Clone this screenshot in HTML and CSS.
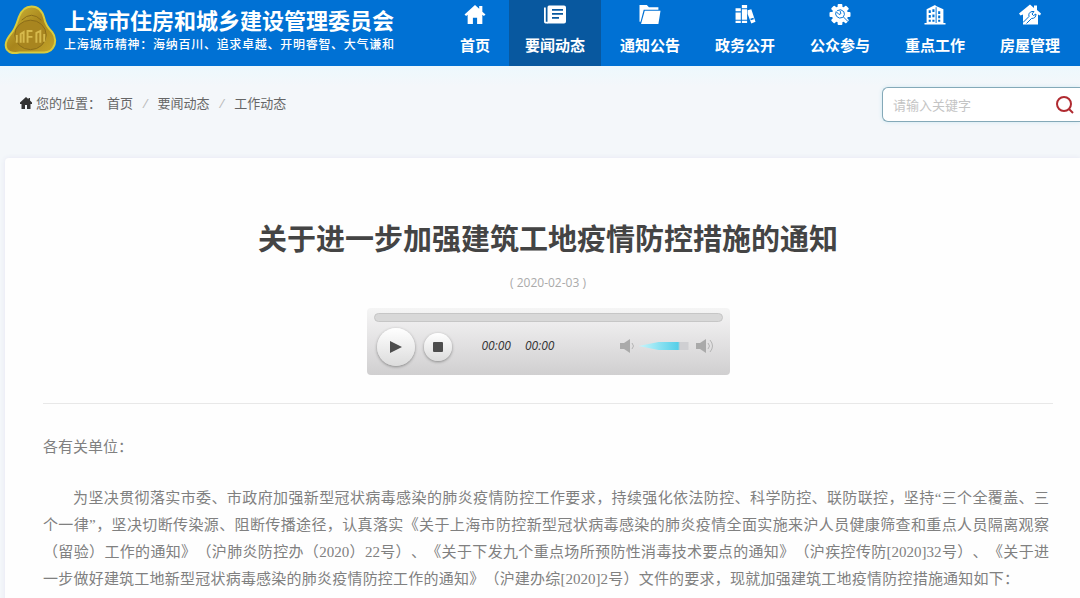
FILE: index.html
```html
<!DOCTYPE html>
<html lang="zh-CN">
<head>
  <meta charset="UTF-8">
  <meta name="viewport" content="width=device-width, initial-scale=1.0">
  <link rel="stylesheet" href="styles.css">
  <title>关于进一步加强建筑工地疫情防控措施的通知</title>
</head>
<body>

<header class="header">
  <a class="brand" href="#">
    <svg class="logo" viewBox="0 0 54 50" aria-hidden="true">
      <defs>
        <linearGradient id="gold" x1="0" y1="0" x2="1" y2="1">
          <stop offset="0" stop-color="#d2bd3c"/>
          <stop offset="0.5" stop-color="#a8851c"/>
          <stop offset="1" stop-color="#c5a52a"/>
        </linearGradient>
      </defs>
      <path d="M15 12C18 4 22 1 28 1C35 1 39 5 41 13C42 19 44 22 49 27C53 32 53 39 50 43C47 48 42 48 36 48H16C10 49 6 49 3 45C0 40 2 35 7 29C12 23 13 18 15 12Z" fill="url(#gold)" stroke="#d9cc3e" stroke-width="2"/>
      <ellipse cx="27" cy="30" rx="16" ry="15" fill="#a8851f" stroke="#8b6c18"/>
      <path d="M13 38V30M17 38V29L20 27V38M24 38V26H29M24 32H29M33 38V28L37 26V38M41 37V29" stroke="#d6b94c" stroke-width="2" fill="none"/>
      <path d="M18 15Q28 5 38 15" stroke="#8b6c18" stroke-width="1" fill="none"/>
    </svg>
    <span class="brand-text">
      <strong>上海市住房和城乡建设管理委员会</strong>
      <span class="motto">上海城市精神：海纳百川、追求卓越、开明睿智、大气谦和</span>
    </span>
  </a>
  <nav class="nav">
    <a href="#">
      <svg viewBox="0 0 20 20"><path d="M10 1L0 10l1.500 1.500L3 10.300V19h5v-6h4v6h5v-8.700l1.500 1.200L20 10l-3-2.700V2h-3v2.600z"/></svg>
      首页
    </a>
    <a class="active" href="#">
      <svg viewBox="0 0 22 20"><path d="M0 3h1.800v14.200H4V19H1.500Q0 19 0 17z"/><path fill-rule="evenodd" d="M5 1h15q2 0 2 2v14q0 2-2 2H3.500V3Q3.500 1 5 1zM8 4.500v1.800h11V4.500zm0 4v1.800h11V8.500zm0 4v1.800h7v-1.800z"/></svg>
      要闻动态
    </a>
    <a href="#">
      <svg viewBox="0 0 20 20"><path d="M0 1h7l2 2h9v2.500H4L1 17H0z"/><path d="M5 6.500h15L18 19H1.500z"/></svg>
      通知公告
    </a>
    <a href="#">
      <svg viewBox="0 0 20 20"><path fill-rule="evenodd" d="M1 4h5v14H1zm0 3v1h5V7zm0 8v1h5v-1zM7 1h5v17H7zm0 3v1h5V4zm0 11v1h5v-1zM12.500 6l3.500-1 4 12-4 1.500-3.500-9zm2.500 8l.5 1.500 3-1-.5-1.500z"/></svg>
      政务公开
    </a>
    <a href="#">
      <svg viewBox="0 0 22 22"><g><rect x="8.500" y="0" width="5" height="22" rx="1"/><rect x="8.500" y="0" width="5" height="22" rx="1" transform="rotate(45 11 11)"/><rect x="8.500" y="0" width="5" height="22" rx="1" transform="rotate(90 11 11)"/><rect x="8.500" y="0" width="5" height="22" rx="1" transform="rotate(135 11 11)"/><circle cx="11" cy="11" r="8.500"/></g><path class="cut" d="M8 7q4-2.500 7 1 1.500 3-.5 5.500l5 5M14 14q-4 2-6.500-1-2-2.500-.5-5l3 3 2-1-1-3"/></svg>
      公众参与
    </a>
    <a href="#">
      <svg viewBox="0 0 20 20"><path fill-rule="evenodd" d="M0 18h2V5l8-4 1 1 7 3v13h2v1.500H0zM4 6v2.500h2V6zm0 4.500V13h2v-2.500zM4 15v2h2v-2zM7.500 5v2.500h2V5zm0 5v2.500h2V10zm0 5v2h2v-2zM10.600 3v15h.9V3zM13 7v2.500h2V7zm0 4v2.500h2V11zm0 4v2h2v-2z"/></svg>
      重点工作
    </a>
    <a href="#">
      <svg viewBox="0 0 22 20"><path d="M11 0L0 9l1.500 2L4 10v10h15V10l2 1 1-2-4-3.500V1h-3v2.500z"/><path class="cut" d="M4 18l6-6q-1-4 3-5l2 0-2 2.500 1.500 1.500 2.500-1.500q0 4.500-4.500 4.500l-5 5"/></svg>
      房屋管理
    </a>
  </nav>
</header>

<div class="toolbar">
  <div class="crumbs">
    <svg viewBox="0 0 12 12" aria-hidden="true"><path d="M6 0L0 5.500V7h1.500v5H5V8h2v4h3.500V7H12V5.500L10 3.500V1H8.500v1.200z"/></svg>
    <span>您的位置：</span>
    <a href="#">首页</a>
    <i>/</i>
    <a href="#">要闻动态</a>
    <i>/</i>
    <a href="#">工作动态</a>
  </div>
  <form class="search">
    <input type="text" placeholder="请输入关键字" aria-label="请输入关键字">
    <button type="button" aria-label="搜索">
      <svg viewBox="0 0 20 20"><circle cx="9" cy="9" r="7"/><path d="M14 14l4 4"/></svg>
    </button>
  </form>
</div>

<main class="article">
  <h1>关于进一步加强建筑工地疫情防控措施的通知</h1>
  <p class="date">( 2020-02-03 )</p>

  <div class="player">
    <input class="seek" type="range" min="0" max="100" value="0" aria-label="播放进度">
    <div class="controls">
      <button class="play" type="button" aria-label="播放">
        <svg viewBox="0 0 14 14"><path d="M1 1l12 6-12 6z"/></svg>
      </button>
      <button class="stop" type="button" aria-label="停止">
        <svg viewBox="0 0 10 10"><rect width="10" height="10" rx="1"/></svg>
      </button>
      <span class="times"><span>00:00</span><span>00:00</span></span>
      <span class="volume">
        <button type="button" aria-label="静音">
          <svg viewBox="0 0 20 14"><path d="M1 4h4l6-4v14l-6-4H1z"/><path class="wave" d="M13 4q3 3 0 6"/></svg>
        </button>
        <input type="range" min="0" max="100" value="80" aria-label="音量">
        <button type="button" aria-label="最大音量">
          <svg viewBox="0 0 20 14"><path d="M1 4h4l6-4v14l-6-4H1z"/><path class="wave" d="M13 4q3 3 0 6M15 1q5 6 0 12"/></svg>
        </button>
      </span>
    </div>
  </div>

  <div class="content">
    <p>各有关单位：</p>
    <p class="indent">
      <span>为坚决贯彻落实市委、市政府加强新型冠状病毒感染的肺炎疫情防控工作要求，持续强化依法防控、科学防控、联防联控，坚持“三个全覆盖、三</span>
      <span>个一律”，坚决切断传染源、阻断传播途径，认真落实《关于上海市防控新型冠状病毒感染的肺炎疫情全面实施来沪人员健康筛查和重点人员隔离观察</span>
      <span>（留验）工作的通知》（沪肺炎防控办（2020）22号）、《关于下发九个重点场所预防性消毒技术要点的通知》（沪疾控传防[2020]32号）、《关于进</span>
      <span class="last">一步做好建筑工地新型冠状病毒感染的肺炎疫情防控工作的通知》（沪建办综[2020]2号）文件的要求，现就加强建筑工地疫情防控措施通知如下：</span>
    </p>
  </div>
</main>

</body>
</html>
```
FILE: styles.css
```css
* {
  box-sizing: border-box;
}

body {
  margin: 0;
  font-family: "Open Sans", "Noto Sans CJK SC", sans-serif;
  background-color: #f4f7fa;
  color: #444;
  overflow-x: hidden;
}

a {
  color: inherit;
  text-decoration: none;
}

button {
  border: none;
  padding: 0;
  background: none;
  cursor: pointer;
}

svg {
  display: block;
}

/* header */
.header {
  display: flex;
  justify-content: space-between;
  height: 66px;
  padding: 0 4px;
  background-color: #0071d4;
  color: #fff;
}

.brand {
  display: flex;
  align-items: flex-start;
  gap: 7px;
  padding-top: 5px;
}

.logo {
  width: 53px;
  height: 50px;
}

.brand-text {
  display: flex;
  flex-direction: column;
}

.brand-text strong {
  font-size: 22px;
  line-height: 30px;
}

.motto {
  font-size: 12px;
  font-weight: 500;
  line-height: 20px;
  text-align-last: justify;
}

.nav {
  display: flex;
  gap: 3px;
}

.nav a {
  display: flex;
  flex-direction: column;
  align-items: center;
  padding: 4px 16px 0;
  font-size: 15px;
  font-weight: bold;
  line-height: 22px;
  gap: 9px;
  white-space: nowrap;
}

.nav .active {
  background-color: #08589f;
}

.nav svg {
  width: 22px;
  height: 21px;
  fill: #fff;
}

.nav .cut {
  fill: none;
  stroke: #0071d4;
  stroke-width: 1;
}

/* breadcrumb and search */
.toolbar {
  display: flex;
  justify-content: space-between;
  align-items: flex-start;
  height: 92px;
  padding: 21px 0 0 20px;
  background: linear-gradient(#edf8fd, #f4f7fa 20px);
}

.crumbs {
  display: flex;
  align-items: center;
  gap: 10px;
  font-size: 13px;
  line-height: 32px;
  color: #666;
}

.crumbs svg {
  width: 12px;
  height: 12px;
  margin-right: -6px;
  fill: #333;
}

.crumbs span {
  margin-right: -4px;
}

.crumbs i {
  color: #bbb;
}

.search {
  display: flex;
  align-items: center;
  width: 198px;
  height: 35px;
  padding: 0 5px 0 10px;
  border: 1px solid #84a9b8;
  border-right: none;
  border-radius: 6px 0 0 6px;
  background-color: #fff;
  box-shadow: 0 0 4px #cfe8f2;
}

.search input {
  flex: 1;
  min-width: 0;
  padding: 0;
  border: none;
  outline: none;
  background: none;
  font-family: inherit;
  font-size: 13px;
}

.search input::placeholder {
  color: #c4c4c4;
}

.search svg {
  width: 20px;
  height: 20px;
  fill: none;
  stroke: #b02a30;
  stroke-width: 2;
}

/* article */
.article {
  margin-left: 5px;
  padding: 60px 27px 0 38px;
  background-color: #fefefe;
  border-radius: 4px 0 0 0;
  box-shadow: 0 0 5px #e4e6f2;
}

.article h1 {
  margin: 0;
  font-size: 29px;
  line-height: 42px;
  text-align: center;
  color: #444;
}

.date {
  margin: 13px 0 15px;
  font-size: 12px;
  line-height: 20px;
  text-align: center;
  color: #aaa;
}

.player {
  width: 363px;
  height: 67px;
  margin: 0 auto;
  padding: 5px 7px;
  border-radius: 4px;
  background: linear-gradient(#f5f5f5, #e5e4e5 45%, #d0cfd0);
}

.seek {
  display: block;
  appearance: none;
  width: 100%;
  height: 9px;
  margin: 0;
  border: 1px solid #c6c6c6;
  border-radius: 5px;
  background-color: #d8d8d8;
}

.seek::-webkit-slider-thumb,
.volume input::-webkit-slider-thumb {
  appearance: none;
  width: 0;
  height: 0;
}

.controls {
  display: flex;
  align-items: center;
  padding: 6px 8px 0 3px;
}

.play,
.stop {
  display: flex;
  align-items: center;
  justify-content: center;
  border-radius: 50%;
  background: linear-gradient(#fff, #dcdcdc);
  box-shadow: 0 1px 3px #888;
}

.play {
  width: 38px;
  height: 38px;
}

.stop {
  width: 28px;
  height: 28px;
  margin-left: 9px;
}

.play svg {
  width: 14px;
  height: 14px;
  fill: #4d4d4d;
}

.stop svg {
  width: 10px;
  height: 10px;
  fill: #4d4d4d;
}

.times {
  display: flex;
  gap: 14px;
  margin-left: 30px;
  padding-bottom: 3px;
  font-size: 12px;
  font-style: italic;
  color: #333;
}

.volume {
  display: flex;
  align-items: center;
  margin-left: auto;
  padding-bottom: 2px;
}

.volume svg {
  width: 20px;
  height: 14px;
  fill: #aaa;
}

.volume .wave {
  fill: none;
  stroke: #b4b4b4;
  stroke-width: 1;
}

.volume input {
  appearance: none;
  width: 50px;
  height: 8px;
  margin: 0 6px 0 0;
  background: linear-gradient(90deg, #c8f6fc, #55cfe8 78%, #cfcfd2 82%);
  clip-path: polygon(0 50%, 40% 0, 100% 0, 100% 100%, 40% 100%);
}

.content {
  margin-top: 28px;
  padding: 30px 4px 8px 0;
  border-top: 1px solid #e8e8e8;
  font-family: "Liberation Serif", "Noto Sans CJK SC", serif;
  font-size: 15px;
  line-height: 27px;
  text-spacing-trim: space-all;
  color: #808080;
}

.content p {
  margin: 0 0 24px;
}

.indent span {
  display: block;
  text-align-last: justify;
}

.indent span:first-child {
  padding-left: 30px;
}

.indent .last {
  padding-right: 30px;
}
```
